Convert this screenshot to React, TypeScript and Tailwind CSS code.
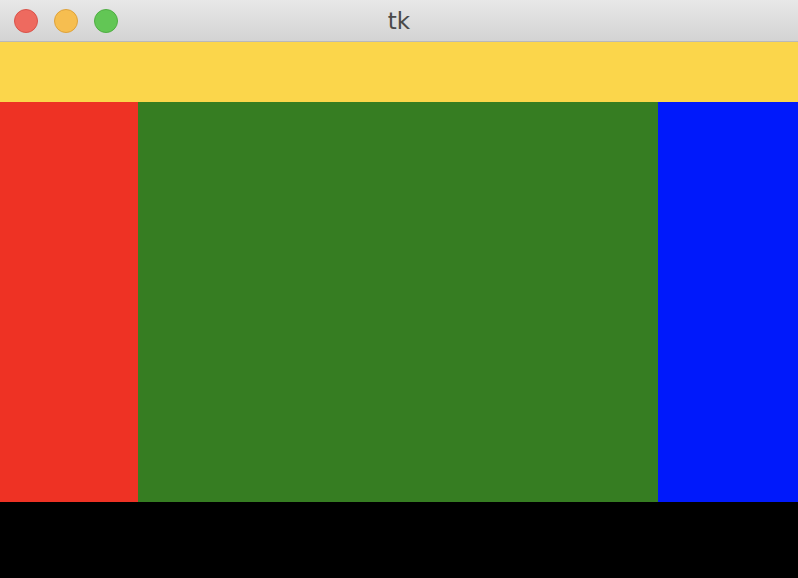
import React from "react";

const lights = [
    { bg: "bg-[#ee6a5f]", border: "border-[#d9534a]" },
    { bg: "bg-[#f6be50]", border: "border-[#dea23b]" },
    { bg: "bg-[#62c655]", border: "border-[#4fae43]" },
];

export default function App() {
    return (
        <div className="w-[798px] h-[578px] flex flex-col bg-black overflow-hidden font-['Liberation_Sans',sans-serif]">
            {/* title bar */}
            <div className="relative h-[42px] shrink-0 flex items-center px-[14px] gap-4 bg-gradient-to-b from-[#e8e8e8] to-[#d3d3d3] border-b border-[#b9b9b9]">
                {lights.map((l, i) => (
                    <div key={i} className={`w-6 h-6 rounded-full border ${l.bg} ${l.border}`} />
                ))}
                <div className="absolute inset-0 flex items-center justify-center pt-[1px] font-['DejaVu_Sans',sans-serif] text-[23px] text-[#4a4a4a] pointer-events-none">
                    tk
                </div>
            </div>

            {/* top band */}
            <div className="h-[60px] shrink-0 bg-[#fbd64b]" />

            {/* middle row */}
            <div className="h-[400px] shrink-0 flex">
                <div className="w-[138px] bg-[#ee3224]" />
                <div className="flex-1 bg-[#367d22]" />
                <div className="w-[140px] bg-[#0019fb]" />
            </div>

            {/* bottom */}
            <div className="flex-1 bg-black" />
        </div>
    );
}
